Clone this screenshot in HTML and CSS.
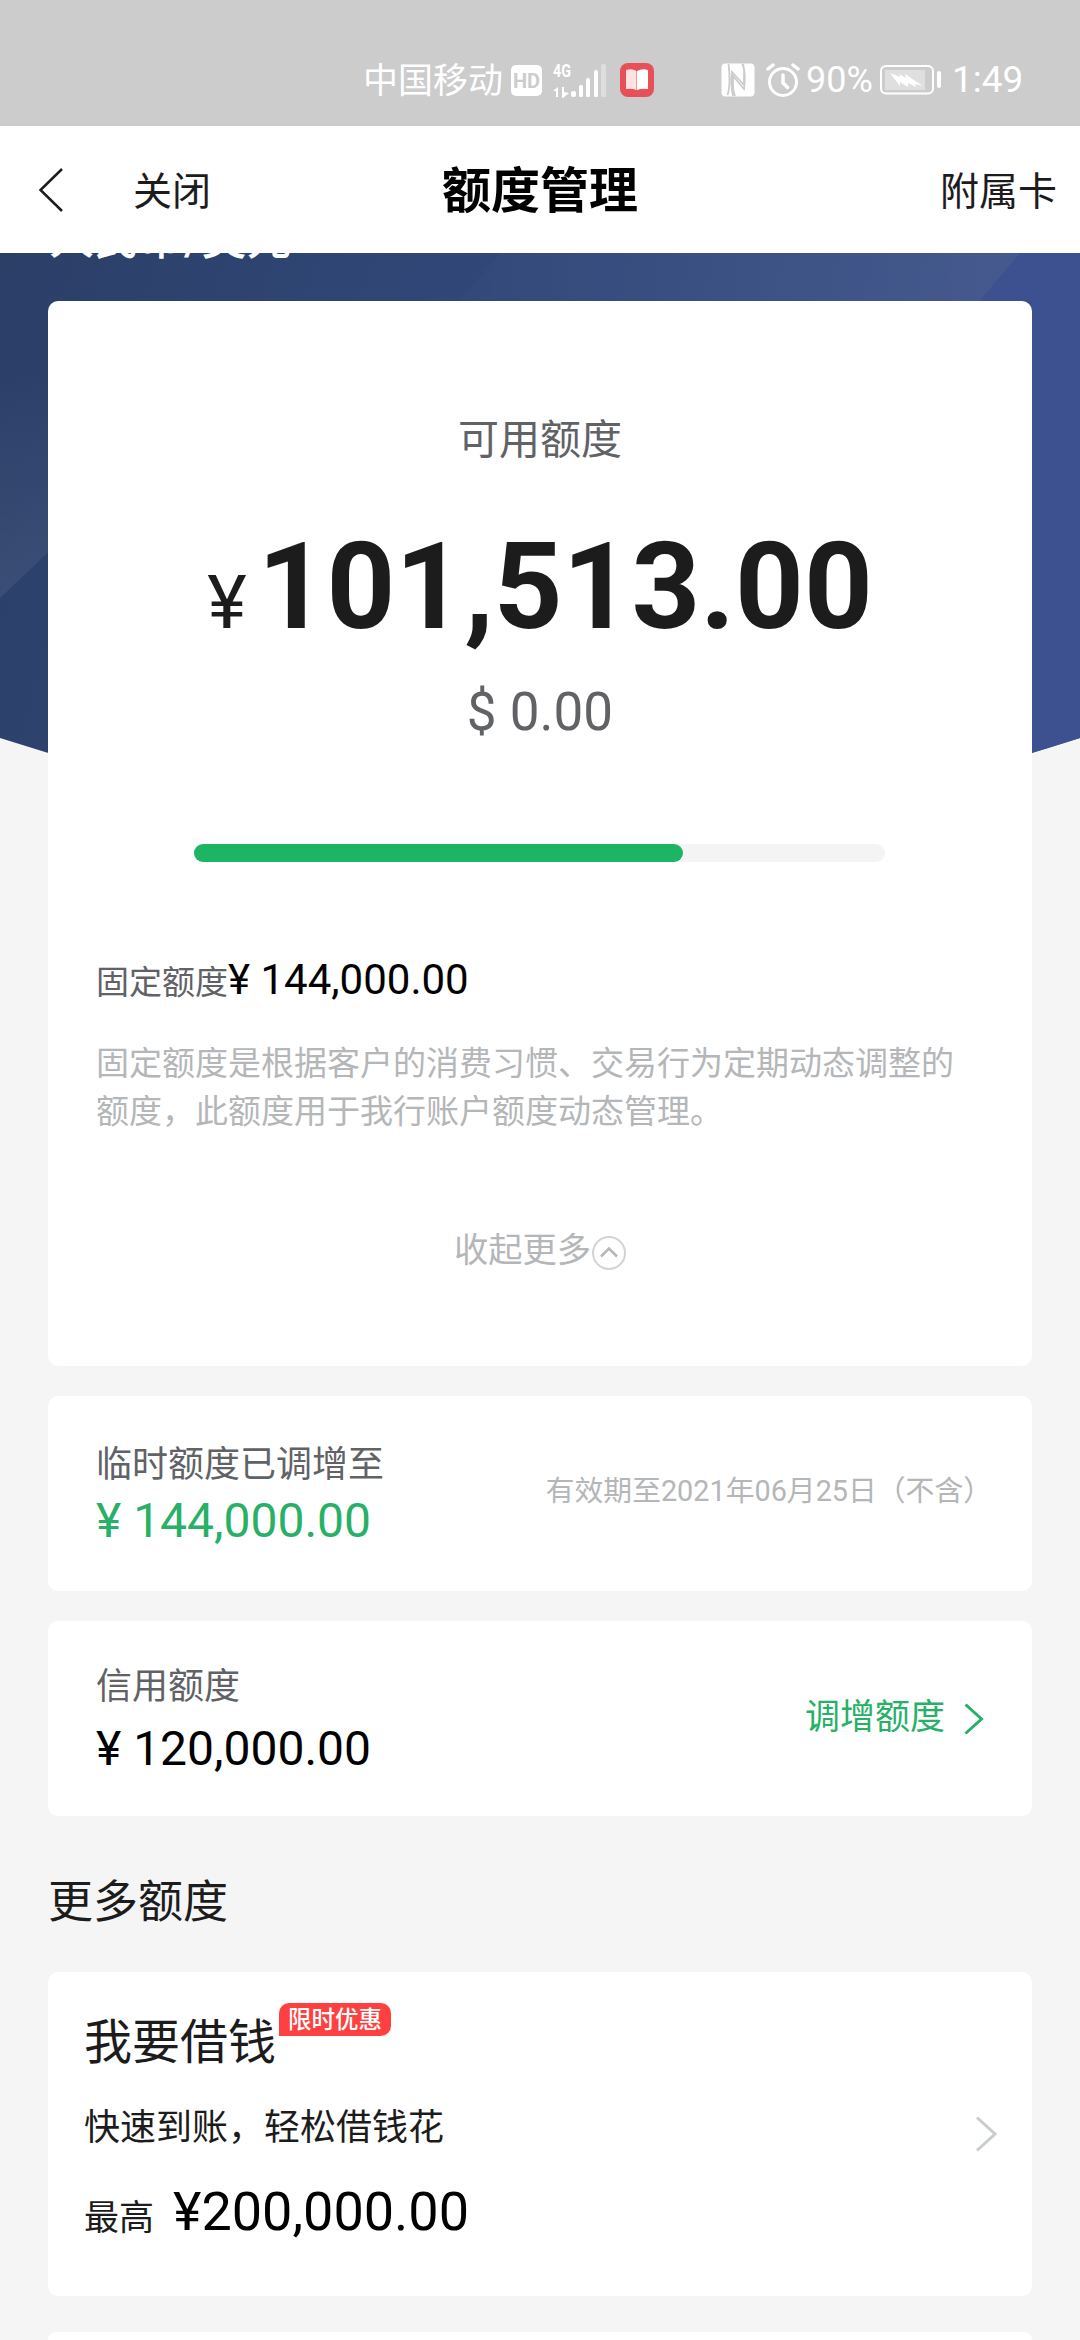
FILE: index.html
```html
<!DOCTYPE html>
<html lang="zh-CN">
<head>
<meta charset="utf-8">
<title>额度管理</title>
<link rel="stylesheet" href="styles.css">
</head>
<body>
<div class="screen">
  <div class="status">
    <span class="carrier">中国移动</span>
    <span class="hd">HD</span>
    <svg class="signal" width="54" height="36" viewBox="0 0 54 36" fill="#fff">
      <text class="net" x="0" y="15" textLength="18" lengthAdjust="spacingAndGlyphs">4G</text>
      <path d="M0 29l5-4v10H3v-6zM9 25h2v5l5 1-6 5H9z"/>
      <rect x="18" y="29" width="5" height="6" rx="2"/><rect x="26" y="23" width="4" height="12" rx="1.5"/><rect x="33" y="16" width="4" height="19" rx="1.5"/><rect x="41" y="8" width="4" height="27" rx="1.5"/><rect x="48" y="2" width="5" height="33" rx="1.5" opacity=".35"/>
    </svg>
    <svg class="reader" width="34" height="34" viewBox="0 0 34 34">
      <rect width="34" height="34" rx="8" fill="#e85059"/>
      <path d="M6 7q6-2 10.500 1v19q-5-2-10.500-1z" fill="#ffe3e3"/><path d="M28 7q-6-2-11 1v19q5-2 11-1z" fill="#fff"/>
    </svg>
    <svg class="nfc" width="34" height="34" viewBox="0 0 34 34">
      <rect x="0.500" y="0.500" width="33" height="33" rx="4" fill="#fff"/>
      <path d="M7.500 1q1 7 1 16t-2 15M12 33q-2.500-12-1-24l12 13V9q0-6-2-8M22 1q3 12 1 25L12 13v10q0 6 2 10" fill="none" stroke="#ccc" stroke-width="1.800"/>
    </svg>
    <svg class="alarm" width="34" height="34" viewBox="0 0 34 34" fill="none" stroke="#fff" stroke-width="3.500" stroke-linecap="round" stroke-linejoin="round">
      <circle cx="17" cy="19" r="13.500" stroke-width="3"/><path d="M17 12v8l4.500 4.500M2 6l5-4M32 6l-5-4"/>
    </svg>
    <span class="percent">90%</span>
    <svg class="battery" width="62" height="30" viewBox="0 0 62 30">
      <rect x="1" y="1" width="52" height="27.500" rx="5" fill="none" stroke="#fff" stroke-width="2"/>
      <rect x="5" y="5" width="40" height="20" fill="#dfdfdf"/>
      <path d="M10 8l10 4-1-3 7 4-1-4 18 12-8-2 1 3-8-4 0 4-8-5 0 4z" fill="#fff"/><rect x="57" y="6" width="4" height="17" rx="2" fill="#fff"/>
    </svg>
    <span class="time">1:49</span>
  </div>

  <header class="nav">
    <div class="nav-left">
      <svg class="back" width="26" height="46" viewBox="0 0 26 46" fill="none" stroke="#1c1c1c" stroke-width="2.500"><path d="M24 2L2.500 23 24 44"/></svg>
      <span class="close">关闭</span>
    </div>
    <h1 class="title">额度管理</h1>
    <span class="extra">附属卡</span>
  </header>

  <main class="content">
    <svg class="hero" width="1080" height="540" viewBox="0 0 1080 540" preserveAspectRatio="none">
      <defs>
        <linearGradient id="sky" x1="0" y1="0" x2="1" y2="0.150"><stop offset="0" stop-color="#2b3f67"/><stop offset=".5" stop-color="#31487a"/><stop offset="1" stop-color="#3b5089"/></linearGradient>
        <linearGradient id="beam" x1="0" y1="0" x2="1" y2="0"><stop offset="0" stop-color="#fff" stop-opacity=".01"/><stop offset="1" stop-color="#fff" stop-opacity=".06"/></linearGradient>
        <linearGradient id="glow" x1="0" y1="0" x2="0" y2="1"><stop offset="0" stop-color="#fff" stop-opacity="0"/><stop offset="1" stop-color="#fff" stop-opacity=".07"/></linearGradient>
      </defs>
      <path d="M0 0H1080V485Q540 660 0 485Z" fill="url(#sky)"/>
      <path d="M500 0H1020L970 60H450Z" fill="url(#beam)"/>
      <path d="M0 120H100V250L0 345Z" fill="url(#glow)"/>
      <path d="M1020 0H1080V485L1032 500V48H980Z" fill="#3d5190"/>
    </svg>
    <div class="currency">人民币/美元</div>

    <section class="card summary">
      <div class="caption">可用额度</div>
      <div class="total"><span class="yen">¥</span>101,513.00</div>
      <div class="dollar">$ 0.00</div>
      <div class="track"><div class="fill" style="width:70.8%"></div></div>
      <div class="fixed"><span class="fixed-label">固定额度</span>¥ 144,000.00</div>
      <p class="note">固定额度是根据客户的消费习惯、交易行为定期动态调整的额度，此额度用于我行账户额度动态管理。</p>
      <div class="toggle">收起更多
        <svg width="34" height="34" viewBox="0 0 34 34" fill="none"><circle cx="17" cy="17" r="16" stroke="#d2d4d5" stroke-width="2"/><path d="M9 20.500l8-8 8 8" stroke="#b4b6b8" stroke-width="2.500"/></svg>
      </div>
    </section>

    <section class="card row">
      <div class="temp">
        <div class="label">临时额度已调增至</div>
        <div class="amount green">¥ 144,000.00</div>
      </div>
      <div class="expiry">有效期至2021年06月25日（不含）</div>
    </section>

    <section class="card row">
      <div class="credit">
        <div class="label">信用额度</div>
        <div class="amount">¥ 120,000.00</div>
      </div>
      <div class="raise">调增额度
        <svg width="20" height="32" viewBox="0 0 20 32" fill="none" stroke="#27b068" stroke-width="3"><path d="M1.500 1.500L17.500 16 1.500 30.500"/></svg>
      </div>
    </section>

    <h2 class="more">更多额度</h2>

    <section class="card loan">
      <div>
        <div class="loan-head"><span class="loan-title">我要借钱</span><span class="badge">限时优惠</span></div>
        <div class="loan-sub">快速到账，轻松借钱花</div>
        <div class="loan-max"><span class="max-label">最高</span>¥200,000.00</div>
      </div>
      <svg class="go" width="22" height="36" viewBox="0 0 22 36" fill="none" stroke="#c9cdd0" stroke-width="3"><path d="M2 1.500L20 18 2 34.500"/></svg>
    </section>
    <section class="card next"></section>
  </main>
</div>
</body>
</html>
```
FILE: styles.css
```css
* { box-sizing: border-box; margin: 0; padding: 0; }
body { background: #f5f5f5; font-family: Roboto, "Noto Sans CJK SC", sans-serif; color: #1c1c1c; }
svg { display: block; flex: none; }
.screen { width: 1080px; height: 2340px; overflow: hidden; display: flex; flex-direction: column; }

.status { flex: none; height: 126px; padding: 34px 50px 0 363px; background: #ccc; color: #fff; display: flex; align-items: center; font-size: 35px; line-height: 40px; white-space: nowrap; }
.carrier { width: 141px; padding-top: 4px; }
.hd { margin-left: 7px; width: 31px; height: 31px; border-radius: 5px; background: #fff; color: #ccc; font-size: 20px; font-weight: 700; line-height: 32px; text-align: center; }
.signal { margin-left: 11px; overflow: visible; }
.net { font-size: 18px; font-weight: 700; }
.reader { margin-left: 13px; }
.nfc { margin-left: 67px; }
.alarm { margin-left: 11px; }
.percent { margin-left: 6px; width: 70px; font-size: 36px; }
.battery { margin-left: 4px; }
.time { margin-left: 10px; font-size: 37px; }

.nav { flex: none; height: 127px; background: #fff; display: grid; grid-template-columns: 1fr auto 1fr; align-items: center; font-size: 39px; line-height: 60px; }
.nav-left { display: flex; align-items: center; gap: 69px; padding-left: 38px; }
.close { padding-top: 4px; }
.title { font-size: 49px; line-height: 60px; color: #000; font-weight: 700; padding-top: 4px; }
.extra { text-align: right; padding: 4px 23px 0 0; }

.content { flex: 1; position: relative; padding: 0 48px; overflow: hidden; }
.hero { position: absolute; left: 0; top: 0; }
.currency { position: relative; height: 48px; margin-top: -43px; line-height: 60px; font-size: 45px; font-weight: 500; color: #fff; padding-left: 1px; }
.card { position: relative; background: #fff; border-radius: 10px; }

.summary { margin-top: 43px; height: 1065px; padding: 109px 48px 0; display: flex; flex-direction: column; }
.caption { font-size: 41px; line-height: 60px; text-align: center; color: #606266; }
.total { margin-top: 57px; font-size: 120px; line-height: 120px; font-weight: 700; text-align: center; white-space: nowrap; }
.yen { font-size: 75px; line-height: 1; font-weight: 400; margin-right: 11px; }
.dollar { margin-top: 35px; font-size: 53px; line-height: 60px; text-align: center; color: #606266; }
.track { margin: 102px 99px 0 98px; height: 18px; border-radius: 9px; background: #f4f4f4; }
.fill { height: 18px; border-radius: 9px; background: #1db563; }
.fixed { margin-top: 93px; font-size: 42px; line-height: 50px; color: #000; }
.fixed-label { font-size: 33px; line-height: 1; color: #606266; }
.note { margin-top: 35px; font-size: 33px; line-height: 48px; color: #b4b6b8; }
.toggle { margin-top: 89px; display: flex; align-items: center; justify-content: center; gap: 1px; font-size: 34.300px; line-height: 50px; color: #b4b6b8; }
.toggle svg { margin-top: 5px; }

.row { margin-top: 30px; height: 195px; padding: 0 48px; display: flex; justify-content: space-between; }
.temp { padding-top: 47px; }
.credit { padding-top: 44px; }
.label { font-size: 36px; line-height: 44px; color: #606266; }
.amount { font-size: 48px; line-height: 60px; color: #000; }
.temp .amount { margin-top: 4px; }
.credit .amount { margin-top: 10px; }
.amount.green { color: #27b068; }
.expiry { align-self: center; font-size: 28.800px; line-height: 40px; padding-bottom: 5px; margin-right: -8px; color: #b4b6b8; }
.raise { align-self: center; display: flex; align-items: center; gap: 19px; font-size: 35px; line-height: 50px; color: #27b068; padding-bottom: 2px; }
.raise svg { margin-top: 3px; }

.more { margin-top: 57px; font-size: 45px; line-height: 60px; font-weight: 400; }
.loan { margin-top: 39px; height: 324px; padding: 41px 35px 0 36px; display: flex; justify-content: space-between; }
.loan-head { display: flex; align-items: flex-start; }
.loan-title { font-size: 48px; line-height: 60px; }
.badge { margin: -10px 0 0 3px; width: 112px; height: 33px; border-radius: 10px 10px 10px 0; background: #fe4041; color: #fff; font-size: 23.500px; line-height: 34px; text-align: center; font-weight: 500; }
.loan-sub { margin-top: 35px; font-size: 36px; line-height: 40px; }
.loan-max { margin-top: 34px; font-size: 54px; line-height: 60px; color: #000; }
.max-label { font-size: 35px; line-height: 1; color: #1c1c1c; margin-right: 19px; }
.go { margin-top: 103px; }
.next { margin-top: 36px; height: 8px; border-radius: 10px 10px 0 0; }
```
